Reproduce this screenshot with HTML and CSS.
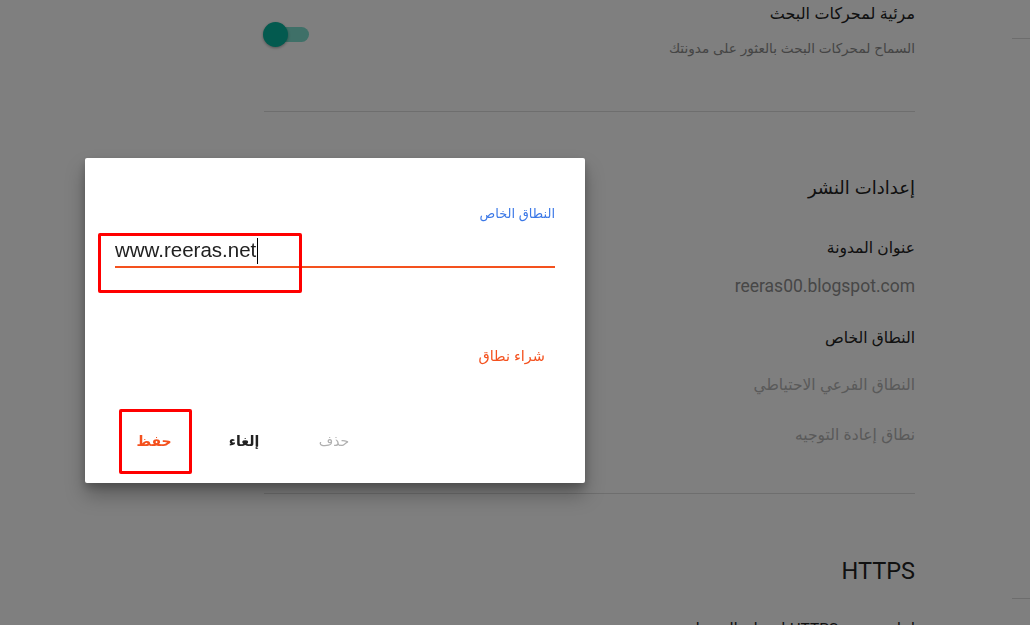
FILE: index.html
```html
<!DOCTYPE html>
<html lang="ar" dir="rtl">
<head>
<meta charset="utf-8">
<title>إعدادات</title>
<link rel="stylesheet" href="styles.css">
</head>
<body>
<div class="layout">
  <aside class="rail">
    <div class="rail-line rail-top"></div>
    <div class="rail-line rail-bottom"></div>
  </aside>
  <main class="content">
    <section class="setting-row">
      <div class="setting-text">
        <div class="row-title">مرئية لمحركات البحث</div>
        <div class="row-sub">السماح لمحركات البحث بالعثور على مدونتك</div>
      </div>
      <div class="toggle"><span class="track"></span><span class="knob"></span></div>
    </section>
    <hr class="divider">
    <section class="group">
      <h2 class="group-title">إعدادات النشر</h2>
      <div class="item-title first">عنوان المدونة</div>
      <div class="item-value latin">reeras00.blogspot.com</div>
      <div class="item-title gap-lg">النطاق الخاص</div>
      <div class="item-muted gap-md">النطاق الفرعي الاحتياطي</div>
      <div class="item-muted gap-sm">نطاق إعادة التوجيه</div>
    </section>
    <hr class="divider divider-2">
    <section class="group">
      <h2 class="group-title https latin">HTTPS</h2>
      <div class="item-title cut">إعادة توجيه <span class="latin">HTTPS</span> لضمان الوصول</div>
    </section>
  </main>
</div>

<div class="overlay"></div>

<div class="dialog">
  <div class="field-label">النطاق الخاص</div>
  <div class="field" dir="ltr">
    <span class="field-text">www.reeras.net</span><span class="caret"></span>
  </div>
  <div class="buy-row"><span class="buy">شراء نطاق</span></div>
  <div class="actions">
    <button class="btn btn-muted">حذف</button>
    <button class="btn btn-dark">إلغاء</button>
    <button class="btn btn-accent">حفظ</button>
  </div>
  <div class="mark mark-field"></div>
  <div class="mark mark-save"></div>
</div>
</body>
</html>
```

FILE: styles.css
```css
* { box-sizing: border-box; }

html, body {
  margin: 0;
  padding: 0;
  height: 100%;
  overflow: hidden;
}

body {
  background: #ffffff;
  font-family: Arial, "Liberation Sans", "DejaVu Sans", sans-serif;
  color: #222222;
}

.latin {
  font-family: Roboto, Arial, "Liberation Sans", sans-serif;
}

.layout {
  display: flex;
  flex-direction: row;
  height: 625px;
}

.rail {
  width: 18px;
  flex: none;
  display: flex;
  flex-direction: column;
}

.rail-line {
  height: 1px;
  background: #dadada;
}
.rail-top { margin-top: 38px; }
.rail-bottom { margin-top: 559px; }

.content {
  width: 651px;
  margin-right: 97px;
  flex: none;
}

.setting-row {
  display: flex;
  align-items: flex-start;
  justify-content: space-between;
  padding-bottom: 51px;
}

.row-title {
  font-size: 16px;
  line-height: 28px;
  color: #222;
}

.row-sub {
  margin-top: 10px;
  font-size: 13.6px;
  line-height: 22px;
  color: #8a8a8a;
}

.toggle {
  position: relative;
  width: 47px;
  height: 26px;
  margin-top: 21px;
  margin-left: -1px;
}
.track {
  position: absolute;
  left: 7px;
  top: 6px;
  width: 39px;
  height: 15px;
  border-radius: 8px;
  background: #7ee0d0;
}
.knob {
  position: absolute;
  left: 0;
  top: 1px;
  width: 25px;
  height: 25px;
  border-radius: 50%;
  background: #06b49e;
  box-shadow: 0 1px 3px rgba(0,0,0,0.35);
}

.divider {
  margin: 0;
  border: 0;
  height: 1px;
  background: #dcdcdc;
}

.group {
  display: flex;
  flex-direction: column;
  align-items: flex-start;
}

.group-title {
  margin: 61px 0 0 0;
  font-size: 18px;
  font-weight: normal;
  line-height: 30px;
  color: #222;
}

.item-title {
  font-size: 15.5px;
  line-height: 26px;
  color: #222;
}
.item-title.first { margin-top: 32px; }
.item-value {
  margin-top: 12px;
  font-size: 17.5px;
  line-height: 26px;
  color: #8e8e8e;
}
.item-muted {
  font-size: 15.5px;
  line-height: 26px;
  color: #b4b4b4;
}
.gap-lg { margin-top: 26px; }
.gap-md { margin-top: 21px; }
.gap-sm { margin-top: 24px; }

.divider-2 { margin-top: 45px; }

.https {
  margin-top: 61px;
  font-size: 23.5px;
  line-height: 32px;
}
.cut { margin-top: 29px; }

.overlay {
  position: fixed;
  inset: 0;
  background: rgba(0, 0, 0, 0.5);
}

.dialog {
  position: absolute;
  left: 85px;
  top: 158px;
  width: 500px;
  height: 325px;
  background: #fff;
  border-radius: 2px;
  box-shadow: 0 12px 20px rgba(0,0,0,0.28), 0 4px 8px rgba(0,0,0,0.2);
  padding: 0 30px;
  display: flex;
  flex-direction: column;
}

.field-label {
  margin-top: 47px;
  font-size: 13px;
  line-height: 18px;
  color: #3b78e7;
}

.field {
  margin-top: 14px;
  height: 31px;
  border-bottom: 2px solid #f4511e;
  display: flex;
  align-items: flex-start;
  direction: ltr;
}
.field-text {
  font-family: Arial, "Liberation Sans", sans-serif;
  font-size: 20.5px;
  line-height: 26px;
  color: #212121;
}
.caret {
  width: 1px;
  height: 26px;
  background: #000;
  margin-left: 1px;
  margin-top: 1px;
}

.buy-row {
  margin-top: 78px;
  padding-right: 10px;
}
.buy {
  font-size: 14.5px;
  font-weight: normal;
  line-height: 20px;
  color: #f4511e;
}

.actions {
  margin-top: 57px;
  margin-left: -6px;
  display: flex;
  justify-content: flex-end;
}

.btn {
  width: 90px;
  height: 36px;
  border: 0;
  background: transparent;
  font-family: Arial, "Liberation Sans", "DejaVu Sans", sans-serif;
  font-size: 14px;
  font-weight: bold;
  padding: 0;
  cursor: pointer;
}
.btn-muted { color: #b0b0b0; font-weight: normal; }
.btn-dark { color: #212121; }
.btn-accent { color: #f4511e; }

.mark {
  position: absolute;
  border: 3px solid #ff0000;
  border-radius: 2px;
}
.mark-field {
  left: 13px;
  top: 75px;
  width: 204px;
  height: 60px;
}
.mark-save {
  left: 34px;
  top: 251px;
  width: 73px;
  height: 65px;
}
```
